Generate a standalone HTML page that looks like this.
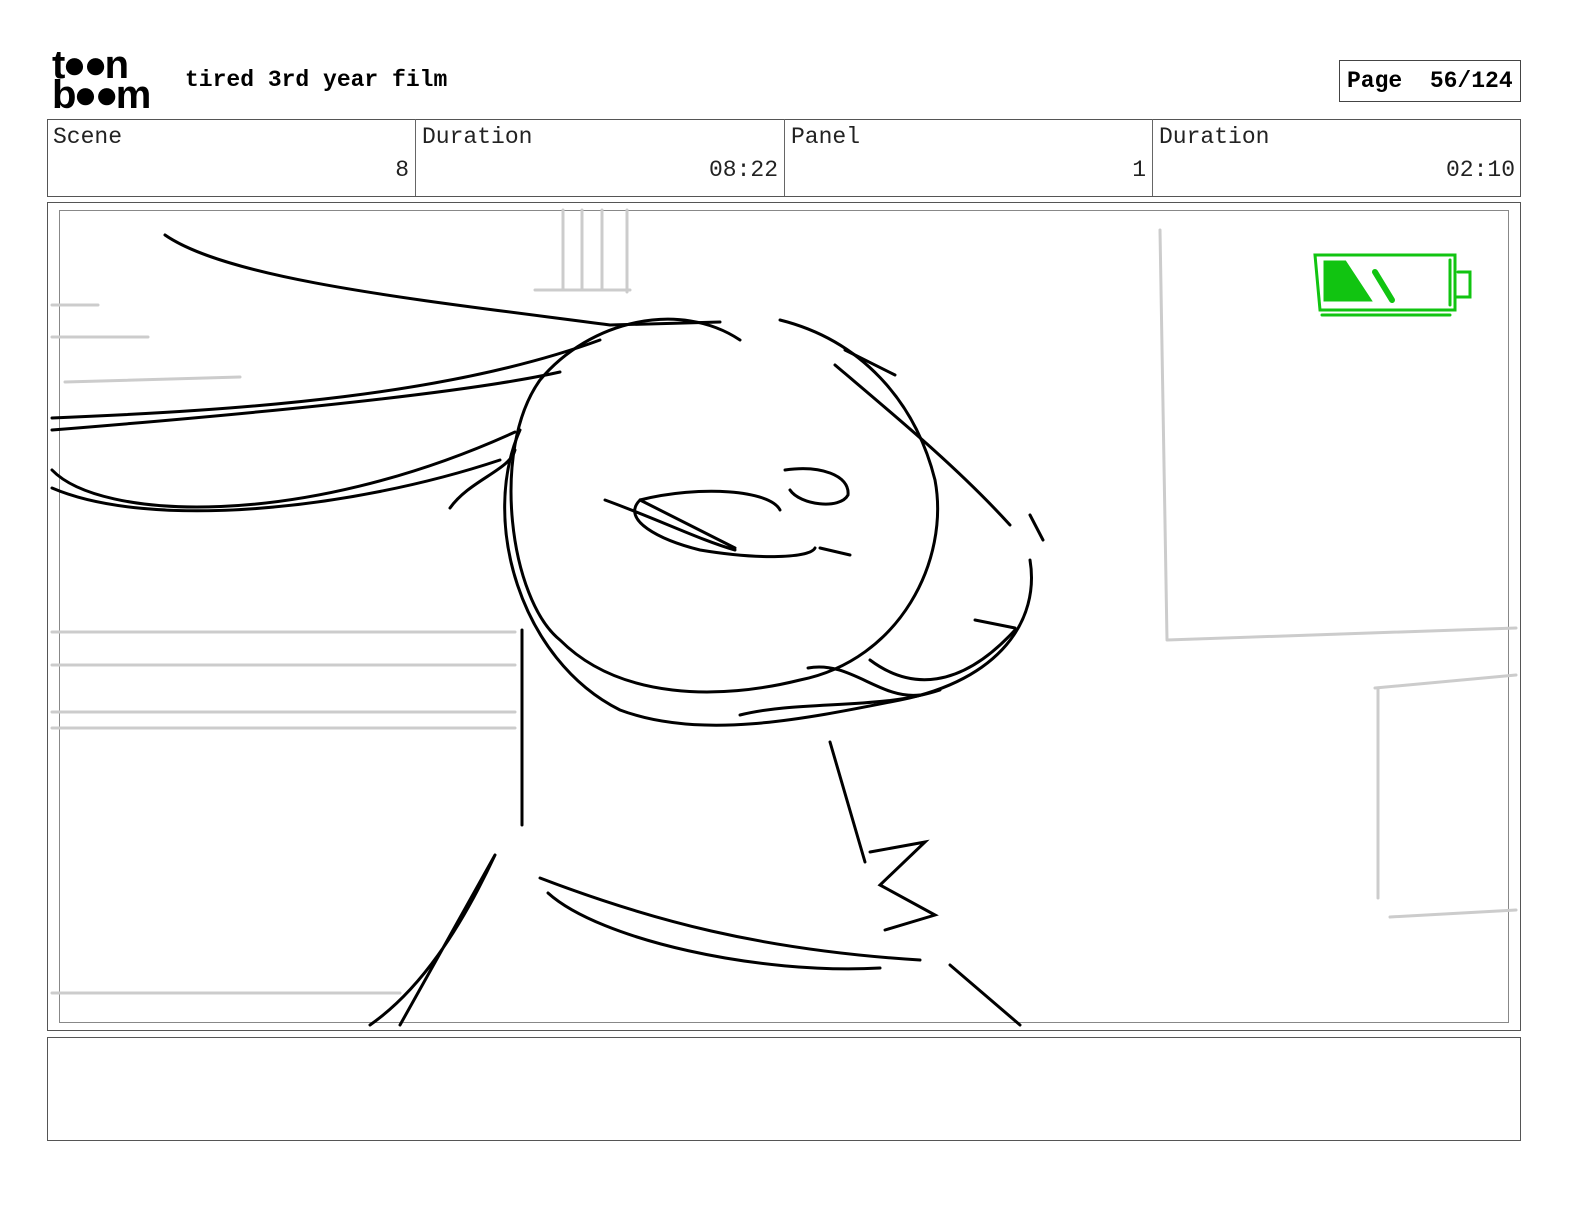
<!DOCTYPE html>
<html><head><style>
body{margin:0;width:1584px;height:1224px;background:#fff;position:relative;font-family:"Liberation Mono",monospace;overflow:hidden}
.a{position:absolute}
.cell{position:absolute;top:119px;height:77px;border-right:1px solid #666;box-sizing:border-box}
.lab{position:absolute;left:6px;top:5px;font-size:23px;color:#222}
.val{position:absolute;right:6px;top:38px;font-size:23px;color:#222}
</style></head><body>
<div class="a" style="left:52px;top:50px;font-family:'Liberation Sans',sans-serif;font-weight:bold;font-size:40px;line-height:30px;letter-spacing:-3px">t●●n<br>b●●m</div>
<div class="a" style="left:185px;top:67px;font-weight:bold;font-size:23px">tired 3rd year film</div>
<div class="a" style="left:1339px;top:60px;width:182px;height:42px;border:1px solid #444;box-sizing:border-box;font-weight:bold;font-size:23px;line-height:40px;padding-left:7px;white-space:pre">Page  56/124</div>
<div class="a" style="left:47px;top:119px;width:1474px;height:78px;border:1px solid #555;box-sizing:border-box"></div>
<div class="cell" style="left:47px;width:369px"><div class="lab">Scene</div><div class="val">8</div></div>
<div class="cell" style="left:416px;width:369px"><div class="lab">Duration</div><div class="val">08:22</div></div>
<div class="cell" style="left:785px;width:368px"><div class="lab">Panel</div><div class="val">1</div></div>
<div class="cell" style="left:1153px;width:368px;border:none"><div class="lab">Duration</div><div class="val">02:10</div></div>
<div class="a" style="left:47px;top:202px;width:1474px;height:829px;border:1px solid #555;box-sizing:border-box"></div>
<div class="a" style="left:59px;top:210px;width:1450px;height:813px;border:1px solid #888;box-sizing:border-box"></div>
<div class="a" style="left:47px;top:1037px;width:1474px;height:104px;border:1px solid #555;box-sizing:border-box"></div>
<svg class="a" style="left:0;top:0" width="1584" height="1224" fill="none" stroke-linecap="round">
<g stroke="#ccc" stroke-width="3">
<path d="M52 305H98M52 337H148M65 382L240 377M52 632H515M52 665H515M52 712H515M52 728H515M52 993H400M1160 230L1167 640M1167 640L1516 628M1375 688L1516 675M1378 688L1378 898M1390 917L1516 910M563 210V290M582 210V290M602 210V290M627 210V292M535 290H630"/>
</g>
<g stroke="#000" stroke-width="3">
<path d="M165 235C230 280 420 300 610 325L720 322"/>
<path d="M52 418C250 410 450 395 600 340M52 430C300 410 480 390 560 372"/>
<path d="M52 470C100 520 300 530 515 432M52 488C150 530 350 510 500 460"/>
<path d="M740 340C680 300 590 320 540 380C490 450 510 600 560 640C620 700 720 700 800 680C900 660 950 560 935 480C915 400 860 340 780 320"/>
<path d="M520 430C480 520 520 660 620 710C700 740 800 720 900 700C1000 680 1040 620 1030 560M835 365C900 420 960 470 1010 525M845 350L895 375M1030 515L1043 540"/>
<path d="M975 620L1015 628M870 660C910 690 960 690 1015 630M740 715C800 700 880 710 940 690M808 668C850 660 880 700 920 695"/>
<path d="M605 500C660 520 700 540 735 550M640 500C700 485 770 490 780 510M640 500C620 520 660 540 700 550C760 560 810 558 815 548M820 548L850 555M640 500L735 548M785 470C820 465 850 475 848 495C840 510 800 505 790 490"/>
<path d="M450 508C470 480 510 470 515 450M522 630V825M495 855C460 930 420 990 370 1025M495 855L400 1025"/>
<path d="M830 742L865 862M870 852L925 842L880 885L935 915L885 930M540 878C650 920 760 950 920 960M548 893C600 940 760 975 880 968M950 965L1020 1025"/>
</g>
<g stroke="#11c411" stroke-width="3"><path d="M1315 255H1455V310H1320ZM1450 260V305M1458 272H1470V297H1455M1322 315H1450"/>
<path d="M1325 262L1345 262L1370 300L1325 300Z" fill="#11c411"/><path d="M1375 272L1392 300" stroke-width="6"/></g>
</svg>
</body></html>
